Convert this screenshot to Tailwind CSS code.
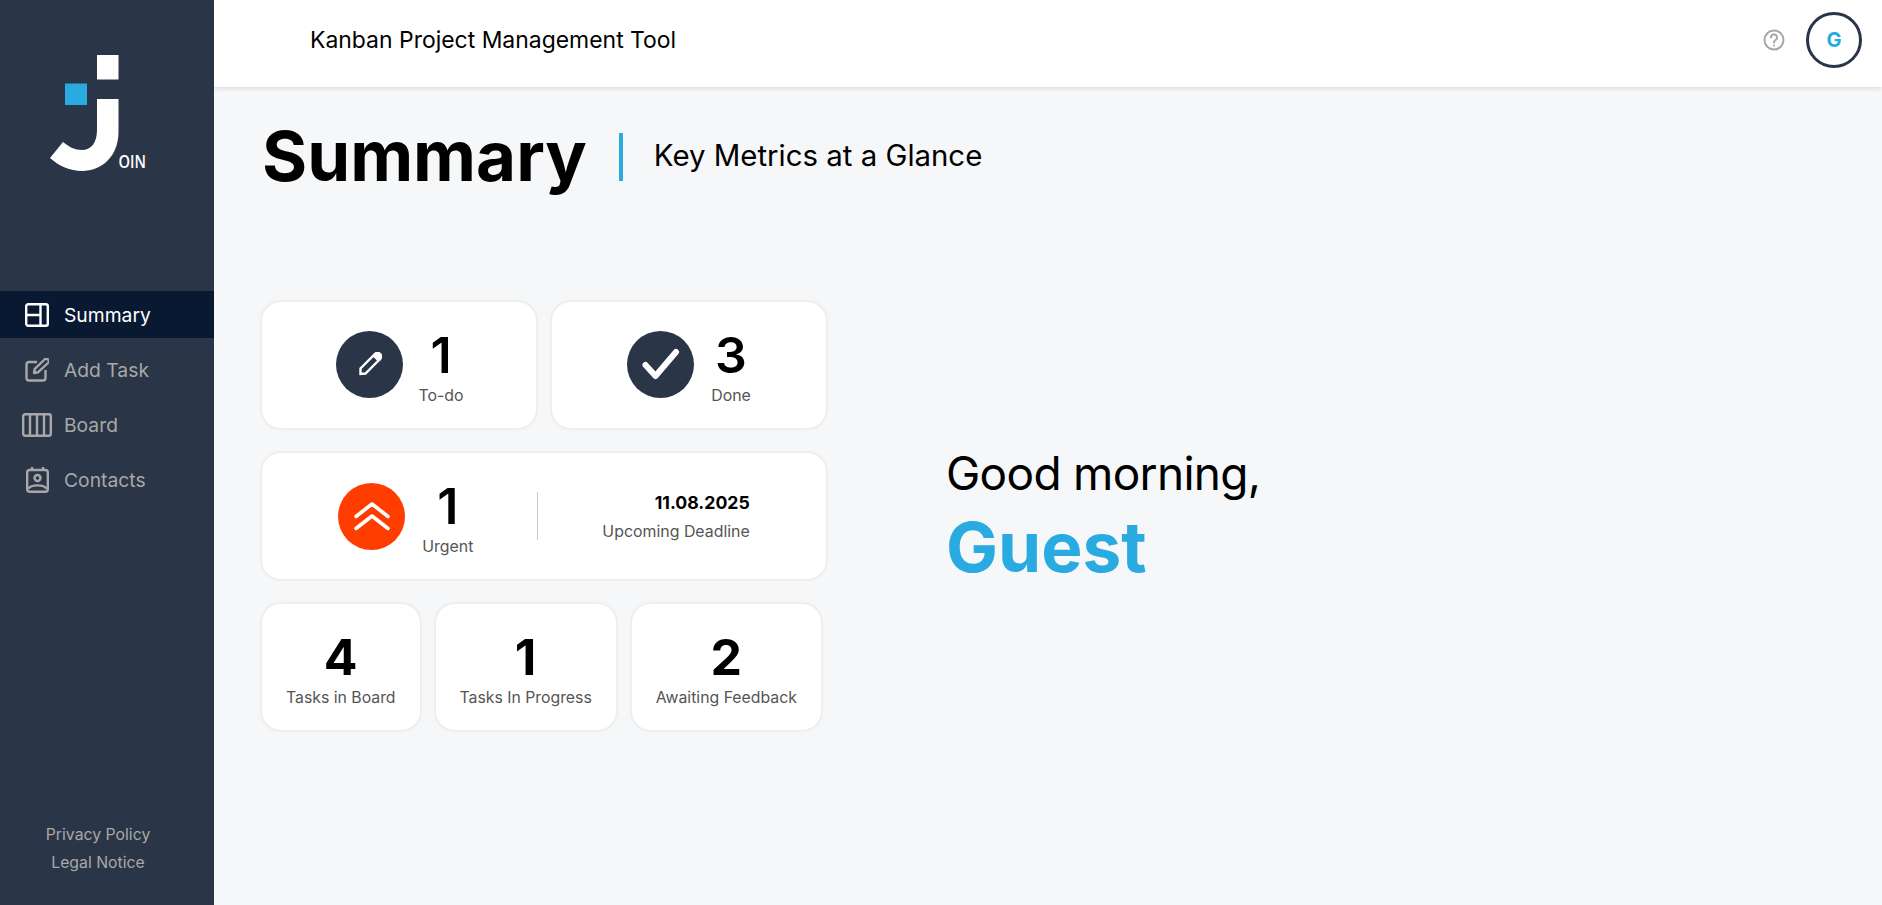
<!DOCTYPE html>
<html lang="en">
<head>
<meta charset="utf-8">
<title>Join – Summary</title>
<script src="https://cdn.jsdelivr.net/npm/@tailwindcss/browser@4"></script>
</head>
<body class="h-[905px] w-full overflow-hidden bg-[#f6f7f8] font-['Inter','Noto_Sans',sans-serif] text-black">
<div class="flex h-[905px]">
  <aside class="flex h-full w-[214px] shrink-0 flex-col bg-[#2a3547]">
    <div class="h-[291px] pl-[50px] pt-[55px]">
      <svg class="block" width="125" height="120" viewBox="50 55 125 120">
        <rect x="97" y="55" width="21.500" height="24.500" fill="#fff"/>
        <rect x="65" y="83.500" width="22" height="21.500" fill="#29abe2"/>
        <path fill="#fff" d="M97 99H118.500V132C118.500 156 102 171 82 171C70 171 59 166 50 158L63 142C69 147 75 150 82 150C91 150 97 143 97 130Z"/>
        <text x="118.500" y="167.500" fill="#fff" font-size="18" font-weight="600" font-family="Open Sans" textLength="27.500" lengthAdjust="spacingAndGlyphs">OIN</text>
      </svg>
    </div>
    <nav class="flex flex-col gap-2 text-[19.300px] text-[#a8a8a8]">
      <a class="flex h-[47px] items-center gap-[15px] bg-[#091931] pl-[25px] text-white">
        <svg class="w-6 h-6 shrink-0" viewBox="0 0 24 24" fill="none" stroke="currentColor" stroke-width="2.400"><rect x="1.200" y="1.200" width="21.600" height="21.600" rx="2"/><path d="M15.500 1V23M1 12H15.500"/></svg>
        <span class="mt-[2px]">Summary</span>
      </a>
      <a class="flex h-[47px] items-center gap-[15px] pl-[25px]">
        <svg class="w-6 h-6 shrink-0" viewBox="0 0 24 24" fill="none" stroke="currentColor" stroke-width="2.400" stroke-linejoin="round"><path d="M12 4H4A2.500 2.500 0 0 0 1.500 6.500V20A2.500 2.500 0 0 0 4 22.500H18A2.500 2.500 0 0 0 20.500 20V12"/><path d="M9 15L9.800 10.800L19.500 1.500A2.200 2.200 0 0 1 23 5L13.200 14.200Z"/></svg>
        <span class="mt-[2px]">Add Task</span>
      </a>
      <a class="flex h-[47px] items-center gap-[12px] pl-[22px]">
        <svg class="h-6 w-[30px] shrink-0" viewBox="0 0 30 24" fill="none" stroke="currentColor" stroke-width="2.400"><rect x="1.200" y="1.200" width="27.600" height="21.600" rx="2"/><path d="M8 1V23M15 1V23M22 1V23"/></svg>
        <span class="mt-[2px]">Board</span>
      </a>
      <a class="flex h-[47px] items-center gap-[15px] pl-[26px]">
        <svg class="h-[26px] w-[23px] shrink-0" viewBox="0 0 23 26" fill="none" stroke="currentColor" stroke-width="2.400"><rect x="1.200" y="3" width="20.600" height="21.800" rx="2.500"/><path d="M6 0V4M17 0V4" /><circle cx="11.500" cy="11" r="3"/><path d="M3 21C6 17.500 17 17.500 20 21" stroke-linecap="round"/></svg>
        <span class="mt-[2px]">Contacts</span>
      </a>
    </nav>
    <div class="mt-auto flex flex-col items-center gap-[8px] pb-[32px] text-center text-[15.800px] leading-[20px] text-[#a8a8a8]">
      <a class="ml-[-18px]">Privacy Policy</a>
      <a class="ml-[-18px]">Legal Notice</a>
    </div>
  </aside>
  <div class="flex min-w-0 flex-1 flex-col">
    <header class="flex h-[87px] shrink-0 items-center bg-white pb-[8px] pl-[96px] pr-[20px] shadow-[0_2px_4px_rgba(0,0,0,0.1)]">
      <span class="mt-[2px] flex-1 text-[22.950px]">Kanban Project Management Tool</span>
      <svg class="mr-[21px] h-[22px] w-[22px] text-[#a8a8a8]" viewBox="0 0 22 22" fill="none" stroke="currentColor" stroke-width="2"><circle cx="11" cy="11" r="9.500"/><path d="M8 8.500A3 3 0 1 1 12.500 11C11.500 11.600 11 12 11 13.500" stroke-linecap="round"/><circle cx="11" cy="16.500" r="1" fill="currentColor" stroke="none"/></svg>
      <div class="flex h-14 w-14 items-center justify-center rounded-full border-[3px] border-[#2a3547] text-[20px] font-bold text-[#29abe2]">G</div>
    </header>
    <main class="pl-[47px]">
      <div class="box-content flex h-[75px] items-center pl-px pt-[32px]">
        <h1 class="text-[69px] font-bold leading-none">Summary</h1>
        <div class="ml-[32px] h-12 w-[4px] bg-[#29abe2]"></div>
        <p class="ml-[31px] text-[29.400px]">Key Metrics at a Glance</p>
      </div>
      <div class="mt-[107px] flex items-center gap-[119px]">
        <section class="flex w-[566px] shrink-0 flex-col gap-[23px]">
          <div class="flex gap-[14px]">
            <div class="flex h-[128px] w-[276px] items-center justify-center gap-[15px] rounded-[20px] border border-[#eeeeee] bg-white pl-[2px] shadow-[0_0_3px_rgba(0,0,0,0.08)]">
              <div class="mb-[2px] flex h-[67px] w-[67px] items-center justify-center rounded-full bg-[#2a3547]">
                <svg class="h-6 w-6" viewBox="0 0 24 24" fill="none" stroke="#fff" stroke-width="2.400"><path d="M2.500 22V16.500L15.500 3.500L20.500 8.500L7.500 21.500Z"/><path d="M17 2L18.500 0.800A2 2 0 0 1 21 1L23 3A2 2 0 0 1 23 5.500L22 7Z" fill="#fff"/></svg>
              </div>
              <div class="flex flex-col items-center pt-[3px]">
                <span class="text-[50px] font-semibold leading-[56px]">1</span>
                <span class="mt-[3px] text-[15.900px] leading-[20px] text-[#555]">To-do</span>
              </div>
            </div>
            <div class="flex h-[128px] w-[276px] items-center justify-center gap-[17px] rounded-[20px] border border-[#eeeeee] bg-white shadow-[0_0_3px_rgba(0,0,0,0.08)]">
              <div class="mb-[2px] flex h-[67px] w-[67px] items-center justify-center rounded-full bg-[#2a3547]">
                <svg class="h-[33px] w-[38px]" viewBox="0 0 38 33" fill="none" stroke="#fff" stroke-width="6" stroke-linecap="round" stroke-linejoin="round"><path d="M3.500 17L13.500 28L34 4"/></svg>
              </div>
              <div class="flex flex-col items-center pt-[3px]">
                <span class="text-[50px] font-semibold leading-[56px]">3</span>
                <span class="mt-[3px] text-[15.900px] leading-[20px] text-[#555]">Done</span>
              </div>
            </div>
          </div>
          <div class="flex h-[128px] items-center justify-center gap-16 rounded-[20px] border border-[#eeeeee] bg-white shadow-[0_0_3px_rgba(0,0,0,0.08)]">
            <div class="flex items-center gap-[17px]">
              <div class="flex h-[67px] w-[67px] items-center justify-center rounded-full bg-[#ff3d00]">
                <svg class="h-[30px] w-[40px]" viewBox="0 0 40 30" fill="none" stroke="#fff" stroke-width="3.600" stroke-linecap="round" stroke-linejoin="round"><path d="M4 15.500L20 3L36 15.500M4 27.500L20 15L36 27.500"/></svg>
              </div>
              <div class="flex flex-col items-center pt-[2px]">
                <span class="text-[50px] font-semibold leading-[56px]">1</span>
                <span class="mt-[3px] text-[15.900px] leading-[20px] text-[#555]">Urgent</span>
              </div>
            </div>
            <div class="h-12 w-px bg-[#c8c8c8]"></div>
            <div class="flex flex-col items-end pt-[3px]">
              <span class="text-[17.700px] font-bold leading-[24px]">11.08.2025</span>
              <span class="mt-[5px] text-[15.900px] leading-[24px] text-[#555]">Upcoming Deadline</span>
            </div>
          </div>
          <div class="flex gap-[14px] whitespace-nowrap">
            <div class="flex h-[128px] flex-col items-center justify-center rounded-[20px] border border-[#eeeeee] bg-white px-6 pt-[3px] shadow-[0_0_3px_rgba(0,0,0,0.08)]">
              <span class="text-[50px] font-bold leading-[56px]">4</span>
              <span class="mt-[3px] text-[15.800px] leading-[20px] text-[#555]">Tasks in Board</span>
            </div>
            <div class="flex h-[128px] flex-col items-center justify-center rounded-[20px] border border-[#eeeeee] bg-white px-6 pt-[3px] shadow-[0_0_3px_rgba(0,0,0,0.08)]">
              <span class="text-[50px] font-bold leading-[56px]">1</span>
              <span class="mt-[3px] text-[15.800px] leading-[20px] text-[#555]">Tasks In Progress</span>
            </div>
            <div class="flex h-[128px] flex-col items-center justify-center rounded-[20px] border border-[#eeeeee] bg-white px-6 pt-[3px] shadow-[0_0_3px_rgba(0,0,0,0.08)]">
              <span class="text-[50px] font-bold leading-[56px]">2</span>
              <span class="mt-[3px] text-[15.800px] leading-[20px] text-[#555]">Awaiting Feedback</span>
            </div>
          </div>
        </section>
        <section class="flex flex-col">
          <p class="text-[46px] leading-[62px] tracking-[-0.7px]">Good morning,</p>
          <p class="text-[69.300px] font-bold leading-[86px] text-[#29abe2]">Guest</p>
        </section>
      </div>
    </main>
  </div>
</div>
</body>
</html>
